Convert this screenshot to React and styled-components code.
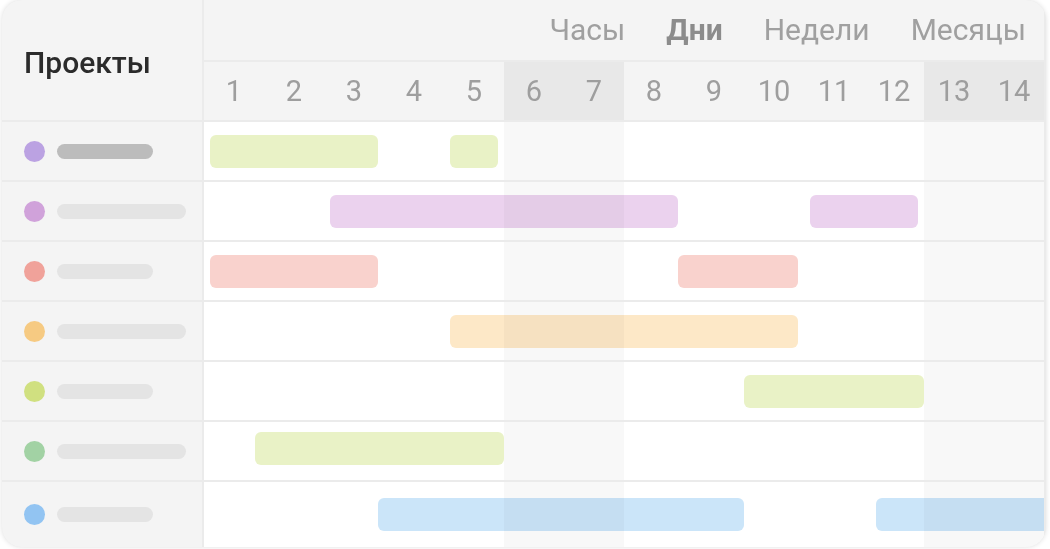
import React from "react";
import styled, { createGlobalStyle } from "styled-components";

const Global = createGlobalStyle`
  html, body { margin: 0; padding: 0; background: #fff; }
  body { font-family: Roboto, "Noto Sans", sans-serif; }
`;

const Page = styled.div`
  padding: 0 4px 2px 2px;
  width: 1044px;
`;

const Card = styled.div`
  display: grid;
  grid-template-columns: 200px 840px;
  grid-template-rows: 60px 58px repeat(6, 58px) 1fr;
  column-gap: 2px;
  row-gap: 2px;
  height: 547px;
  background: #ebebeb;
  border-radius: 20px;
  overflow: hidden;
  box-shadow: 0 0 5px rgba(0, 0, 0, 0.13);
`;

const TitleCell = styled.div`
  grid-row: 1 / 3;
  background: #f4f4f4;
  display: flex;
  align-items: center;
  padding-left: 22px;
  padding-top: 4px;
  font-size: 30px;
  font-weight: 500;
  color: #2b2b2b;
`;

const Tabs = styled.div`
  background: #f4f4f4;
  display: flex;
  justify-content: flex-end;
  align-items: center;
  gap: 41px;
  padding-right: 18px;
  padding-bottom: 2px;
`;

const Tab = styled.span`
  font-size: 30px;
  font-weight: ${(p) => (p.$active ? 700 : 400)};
  color: ${(p) => (p.$active ? "#8c8c8c" : "#a0a0a0")};
`;

const Days = styled.div`
  display: grid;
  grid-template-columns: repeat(14, 60px);
  background: #f4f4f4;
`;

const Day = styled.div`
  display: flex;
  align-items: center;
  justify-content: center;
  font-size: 29px;
  color: #9e9e9e;
  background: ${(p) => (p.$weekend ? "#e8e8e8" : "#f4f4f4")};
`;

const ProjectCell = styled.div`
  background: #f4f4f4;
  display: flex;
  align-items: center;
  gap: 12px;
  padding-left: 22px;
  padding-bottom: ${(p) => (p.$last ? "1px" : "0")};
`;

const Dot = styled.span`
  width: 21px;
  height: 21px;
  border-radius: 50%;
  background: ${(p) => p.$color};
  flex-shrink: 0;
`;

const Pill = styled.span`
  height: 15px;
  width: ${(p) => (p.$long ? "129px" : "96px")};
  border-radius: 8px;
  background: ${(p) => (p.$dark ? "#bcbcbc" : "#e4e4e4")};
`;

const Track = styled.div`
  display: flex;
  align-items: center;
  overflow: hidden;
  padding-bottom: ${(p) => p.$lift || 0}px;
  background: linear-gradient(
    to right,
    #fff 300px,
    #f8f8f8 300px,
    #f8f8f8 420px,
    #fff 420px,
    #fff 720px,
    #f8f8f8 720px
  );
`;

const Bar = styled.div`
  flex-shrink: 0;
  height: 33px;
  border-radius: 6px;
  background: ${(p) => p.$color};
  mix-blend-mode: multiply;
`;

const COLORS = {
  green: "#e9f2c6",
  purple: "#ebd2ee",
  red: "#f9d2cd",
  orange: "#fde8c7",
  blue: "#cbe5f9",
};

const projects = [
  { dot: "#bba2e2", long: false, dark: true, color: COLORS.green, bars: [[6, 174], [246, 294]] },
  { dot: "#d0a2da", long: true, color: COLORS.purple, bars: [[126, 474], [606, 714]] },
  { dot: "#f0a29a", long: false, color: COLORS.red, bars: [[6, 174], [474, 594]] },
  { dot: "#f6ca82", long: true, color: COLORS.orange, bars: [[246, 594]] },
  { dot: "#d0e080", long: false, color: COLORS.green, bars: [[540, 720]] },
  { dot: "#a2d2a4", long: true, color: COLORS.green, lift: 6, bars: [[51, 300]] },
  { dot: "#92c4f2", long: false, color: COLORS.blue, bars: [[174, 540], [672, 860]] },
];

const tabs = ["Часы", "Дни", "Недели", "Месяцы"];
const days = Array.from({ length: 14 }, (_, i) => i + 1);
const isWeekend = (d) => d === 6 || d === 7 || d === 13 || d === 14;

export default function App() {
  return (
    <>
      <Global />
      <Page>
        <Card>
          <TitleCell>Проекты</TitleCell>
          <Tabs>
            {tabs.map((t) => (
              <Tab key={t} $active={t === "Дни"}>
                {t}
              </Tab>
            ))}
          </Tabs>
          <Days>
            {days.map((d) => (
              <Day key={d} $weekend={isWeekend(d)}>
                {d}
              </Day>
            ))}
          </Days>
          {projects.map((p, i) => {
            let cursor = 0;
            return (
              <React.Fragment key={i}>
                <ProjectCell $last={i === projects.length - 1}>
                  <Dot $color={p.dot} />
                  <Pill $long={p.long} $dark={p.dark} />
                </ProjectCell>
                <Track $lift={p.lift}>
                  {p.bars.map(([s, e], j) => {
                    const ml = s - cursor;
                    cursor = e;
                    return (
                      <Bar
                        key={j}
                        $color={p.color}
                        style={{ marginLeft: ml, width: e - s }}
                      />
                    );
                  })}
                </Track>
              </React.Fragment>
            );
          })}
        </Card>
      </Page>
    </>
  );
}
